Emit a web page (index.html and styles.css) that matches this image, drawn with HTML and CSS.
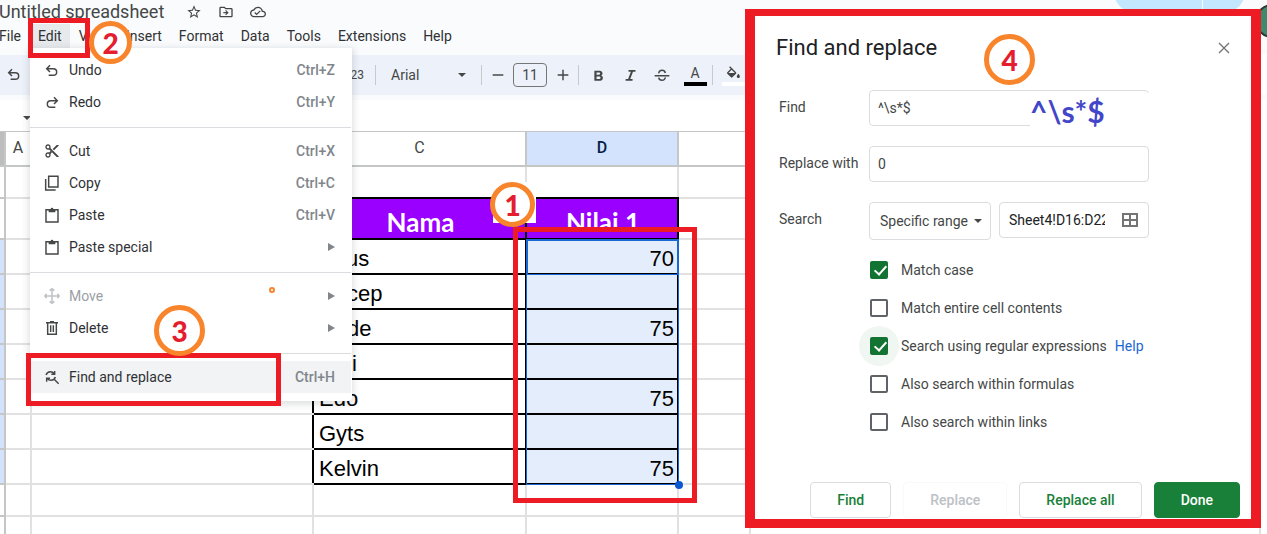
FILE: index.html
```html
<!DOCTYPE html>
<html lang="en">
<head>
    <meta charset="UTF-8">
    <meta name="viewport" content="width=device-width, initial-scale=1.0">
    <title>Untitled spreadsheet</title>
    <link rel="stylesheet" href="styles.css">
</head>
<body>

    <header class="header">
        <div class="title-row">
            <span class="doc-title">Untitled spreadsheet</span>
            <svg class="icon" viewBox="0 0 24 24"><path d="M22 9.24l-7.19-.62L12 2 9.19 8.63 2 9.24l5.46 4.73L5.82 21 12 17.27 18.18 21l-1.63-7.03L22 9.24zM12 15.4l-3.76 2.27 1-4.28-3.32-2.88 4.38-.38L12 6.1l1.71 4.04 4.38.38-3.32 2.88 1 4.28L12 15.4z"/></svg>
            <svg class="icon" viewBox="0 0 24 24"><path d="M20 6h-8l-2-2H4c-1.1 0-2 .9-2 2v12c0 1.1.9 2 2 2h16c1.1 0 2-.9 2-2V8c0-1.1-.9-2-2-2zm0 12H4V6h5.2l2 2H20v10zm-8-1l4-4-4-4-1.2 1.2 1.9 1.9H8v1.8h4.7l-1.9 1.9z"/></svg>
            <svg class="icon" viewBox="0 0 24 24"><path d="M19.35 10.04C18.67 6.59 15.64 4 12 4 9.11 4 6.6 5.64 5.35 8.04 2.34 8.36 0 10.91 0 14c0 3.31 2.69 6 6 6h13c2.76 0 5-2.24 5-5 0-2.64-2.05-4.78-4.65-4.96zM19 18H6c-2.21 0-4-1.79-4-4 0-2.05 1.53-3.76 3.56-3.97l1.07-.11.5-.95C8.08 7.14 9.94 6 12 6c2.62 0 4.88 1.86 5.39 4.43l.3 1.5 1.53.11c1.56.1 2.78 1.41 2.78 2.96 0 1.65-1.35 3-3 3zm-9-3.82l-2.09-2.09L6.5 13.5 10 17l6.01-6.01-1.41-1.41z"/></svg>
        </div>
        <nav class="menubar">
            <button>File</button>
            <button class="open">Edit</button>
            <button>View</button>
            <button>Insert</button>
            <button>Format</button>
            <button>Data</button>
            <button>Tools</button>
            <button>Extensions</button>
            <button>Help</button>
        </nav>
        <div class="share"><span></span><span></span></div>
        <div class="avatar"></div>
    </header>

    <div class="toolbar">
        <div class="tool-left">
            <button aria-label="Undo"><svg class="icon" viewBox="0 0 24 22"><path class="line" d="M9 4L4 9l5 5M4.5 9H14a5 5 0 0 1 0 10H7"/></svg></button>
            <span class="format-123">123</span>
        </div>
        <span class="divider"></span>
        <button class="font-name">Arial <i class="caret"></i></button>
        <span class="divider"></span>
        <button class="step" aria-label="Decrease font size"><svg class="icon" viewBox="0 0 24 24"><path class="line" d="M4 12h16"/></svg></button>
        <input class="font-size" type="text" value="11" aria-label="Font size">
        <button class="step" aria-label="Increase font size"><svg class="icon" viewBox="0 0 24 24"><path class="line" d="M4 12h16M12 4v16"/></svg></button>
        <span class="divider"></span>
        <button class="tool" aria-label="Bold"><svg class="icon" viewBox="0 0 22 22"><path d="M15.6 11.79c.97-.67 1.65-1.77 1.65-2.79 0-2.26-1.75-4-4-4H6v14h8.04c2.09 0 3.71-1.7 3.71-3.79 0-1.52-.86-2.82-2.15-3.42zM9 7.5h3.5c.83 0 1.5.67 1.5 1.5s-.67 1.5-1.5 1.5H9v-3zm4 9H9v-3.5h4c.83 0 1.5.92 1.5 1.75S13.83 16.5 13 16.5z"/></svg></button>
        <button class="tool" aria-label="Italic"><svg class="icon" viewBox="0 0 22 22"><path d="M9 4v2.600h3.200l-3.800 9.800H5V19h9.500v-2.600h-3.200l3.800-9.800H18.500V4z"/></svg></button>
        <button class="tool" aria-label="Strikethrough"><svg class="icon" viewBox="0 0 24 24"><path class="line" d="M1 13h22M17 9c-.5-2.500-2.400-4-5-4S7 6.800 7.200 9.500M7 16c.5 2.500 2.400 4 5 4s5-1.800 4.800-4.500"/></svg></button>
        <button class="tool colour" aria-label="Text colour"><span>A</span><i></i></button>
        <span class="divider"></span>
        <button class="tool colour fill" aria-label="Fill colour">
            <svg class="icon" viewBox="0 0 24 20"><path d="M16.56 8.94L7.62 0 6.21 1.41l2.38 2.38-5.15 5.15c-.59.59-.59 1.54 0 2.12l5.5 5.5c.29.29.68.44 1.06.44s.77-.15 1.06-.44l5.5-5.5c.59-.58.59-1.53 0-2.12zM5.21 10L10 5.21 14.79 10H5.21zM20 11s-2.4 2.6-2.4 4.2a2.4 2.4 0 0 0 4.8 0C22.4 13.6 20 11 20 11z"/></svg>
            <i></i>
        </button>
    </div>

    <div class="formula-bar"><i class="caret"></i></div>

    <main class="workspace">
        <div class="sheet">
            <table>
                <colgroup>
                    <col class="col-row"><col class="col-a"><col class="col-b"><col class="col-c"><col class="col-d"><col class="col-e"><col>
                </colgroup>
                <tr class="letters"><th class="corner"></th><th>A</th><th>B</th><th>C</th><th class="on">D</th><th></th><th></th></tr>
                <tr class="short above"><th></th><td></td><td></td><td></td><td></td><td></td><td></td></tr>
                <tr class="heading"><th></th><td></td><td></td><td class="box">Nama</td><td class="box">Nilai 1</td><td></td><td></td></tr>
                <tr><th class="on"></th><td></td><td></td><td class="box">Agus</td><td class="box num">70</td><td></td><td></td></tr>
                <tr><th class="on"></th><td></td><td></td><td class="box">Cecep</td><td class="box num"></td><td></td><td></td></tr>
                <tr><th class="on"></th><td></td><td></td><td class="box">Dede</td><td class="box num">75</td><td></td><td></td></tr>
                <tr><th class="on"></th><td></td><td></td><td class="box">Didi</td><td class="box num"></td><td></td><td></td></tr>
                <tr><th class="on"></th><td></td><td></td><td class="box">Edo</td><td class="box num">75</td><td></td><td></td></tr>
                <tr><th class="on"></th><td></td><td></td><td class="box">Gyts</td><td class="box num"></td><td></td><td></td></tr>
                <tr><th class="on"></th><td></td><td></td><td class="box">Kelvin</td><td class="box num">75</td><td></td><td></td></tr>
                <tr class="short"><th></th><td></td><td></td><td></td><td></td><td></td><td></td></tr>
                <tr class="short"><th></th><td></td><td></td><td></td><td></td><td></td><td></td></tr>
            </table>
            <div class="selection"><div class="active-cell"></div><div class="handle"></div></div>
        </div>
        <aside class="rail"></aside>
    </main>

    <div class="menu">
        <button><svg class="icon" viewBox="0 0 24 22"><path class="line" d="M9 4L4 9l5 5M4.5 9H14a5 5 0 0 1 0 10H7"/></svg>Undo<kbd>Ctrl+Z</kbd></button>
        <button><svg class="icon" viewBox="0 0 24 22"><path class="line" d="M15 4l5 5-5 5M19.5 9H10a5 5 0 0 0 0 10h7"/></svg>Redo<kbd>Ctrl+Y</kbd></button>
        <hr>
        <button><svg class="icon" viewBox="0 0 24 24"><path d="M9.64 7.64c.23-.5.36-1.05.36-1.64 0-2.21-1.79-4-4-4S2 3.79 2 6s1.79 4 4 4c.59 0 1.14-.13 1.64-.36L10 12l-2.36 2.36C7.14 14.13 6.59 14 6 14c-2.21 0-4 1.79-4 4s1.79 4 4 4 4-1.79 4-4c0-.59-.13-1.14-.36-1.64L12 14l7 7h3v-1L9.64 7.64zM6 8c-1.1 0-2-.89-2-2s.9-2 2-2 2 .89 2 2-.9 2-2 2zm0 12c-1.1 0-2-.89-2-2s.9-2 2-2 2 .89 2 2-.9 2-2 2zm6-7.5c-.28 0-.5-.22-.5-.5s.22-.5.5-.5.5.22.5.5-.22.5-.5.5zM19 3l-6 6 2 2 7-7V3z"/></svg>Cut<kbd>Ctrl+X</kbd></button>
        <button><svg class="icon" viewBox="0 0 24 24"><path class="line" d="M7 2h14v16H7zM2.500 6v16.500h15"/></svg>Copy<kbd>Ctrl+C</kbd></button>
        <button><svg class="icon" viewBox="0 0 24 24"><path class="line" d="M3 4h18v18.500H3z"/><path d="M7 3h3a2 2 0 0 1 4 0h3v5H7z"/></svg>Paste<kbd>Ctrl+V</kbd></button>
        <button><svg class="icon" viewBox="0 0 24 24"><path class="line" d="M3 4h18v18.500H3z"/><path d="M7 3h3a2 2 0 0 1 4 0h3v5H7z"/></svg>Paste special<span class="more"></span></button>
        <hr>
        <button disabled><svg class="icon" viewBox="0 0 24 24"><path class="line" d="M12 1v22M1 12h22M8.500 4L12 1l3.500 3M8.500 20l3.500 3 3.500-3M4 8.500L1 12l3 3.500M20 8.500l3 3.500-3 3.500"/></svg>Move<span class="more"></span></button>
        <button><svg class="icon" viewBox="0 0 24 24"><path class="line" d="M3 4h18M5.500 4v17.500h13V4M10 8v10M14 8v10M9 2.500h6"/></svg>Delete<span class="more"></span></button>
        <hr>
        <button class="hover"><svg class="icon" viewBox="0 0 24 24"><path class="line" d="M3 9c1-3 3.500-5 6.500-5 2.500 0 4.500 1.200 5.500 3M16 3v5h-5M17 12c-1 3-3.500 5-6.500 5-2.500 0-4.500-1.200-5.500-3M4 19v-5h5M16 16l6 6"/></svg>Find and replace<kbd>Ctrl+H</kbd></button>
    </div>

    <form class="dialog">
        <div class="dialog-title">
            <h2>Find and replace</h2>
            <button type="button" class="close" aria-label="Close"><svg viewBox="0 0 12 12"><path d="M1 1l10 10M11 1L1 11"/></svg></button>
        </div>
        <div class="field">
            <label for="find">Find</label>
            <input class="box-input" id="find" type="text" value="^\s*$">
        </div>
        <div class="field">
            <label for="replace">Replace with</label>
            <input class="box-input" id="replace" type="text" value="0">
        </div>
        <div class="field">
            <label for="search">Search</label>
            <div class="select">
                <select id="search"><option>Specific range</option></select>
                <i class="caret"></i>
            </div>
            <div class="range">
                <input type="text" value="Sheet4!D16:D22" aria-label="Range">
                <svg viewBox="0 0 16 14"><path d="M1 1h14v12H1zM8 1v12M1 7h14"/></svg>
            </div>
        </div>
        <div class="options">
            <div><input type="checkbox" id="case" checked><label for="case">Match case</label></div>
            <div><input type="checkbox" id="entire"><label for="entire">Match entire cell contents</label></div>
            <div><input type="checkbox" id="regex" class="focus" checked><label for="regex">Search using regular expressions</label><a href="#">Help</a></div>
            <div><input type="checkbox" id="formulas"><label for="formulas">Also search within formulas</label></div>
            <div><input type="checkbox" id="links"><label for="links">Also search within links</label></div>
        </div>
        <div class="actions">
            <button type="button">Find</button>
            <button type="button" disabled>Replace</button>
            <button type="button">Replace all</button>
            <button type="button" class="primary">Done</button>
        </div>
        <div class="regex-note">^\s*$</div>
    </form>

    <!-- step markers -->
    <div class="frame frame-range"></div>
    <div class="frame frame-edit"></div>
    <div class="frame frame-find"></div>
    <div class="patch"></div>
    <div class="step-no one">1</div>
    <div class="step-no two">2</div>
    <div class="step-no three">3</div>
    <div class="step-no four">4</div>
    <div class="dot"></div>

</body>
</html>
```

FILE: styles.css
```css
* {
    box-sizing: border-box;
}
body {
    margin: 0;
    height: 100vh;
    display: flex;
    flex-direction: column;
    position: relative;
    overflow: hidden;
    background-color: #fff;
    color: #444746;
    font-family: Roboto, sans-serif;
    font-size: 14px;
}
button, input, select {
    font-family: inherit;
    font-size: 14px;
    color: inherit;
}
button {
    border: none;
    padding: 0;
    background: none;
    cursor: pointer;
}
.icon {
    width: 16px;
    height: 16px;
    flex: none;
    fill: #444746;
}
.icon .line {
    fill: none;
    stroke: #444746;
    stroke-width: 2.2;
}
.caret {
    width: 0;
    height: 0;
    border: 4px solid transparent;
    border-top-color: #444746;
    border-bottom: none;
}

/* header */
.header {
    position: relative;
    height: 55px;
    flex: none;
    overflow: hidden;
    background-color: #f9fbfd;
}
.title-row {
    display: flex;
    align-items: center;
    gap: 16px;
    height: 24px;
}
.doc-title {
    margin-left: -1px;
    margin-right: 6px;
    font-size: 18px;
    line-height: 22px;
}
.menubar {
    display: flex;
    gap: 1px;
    height: 24px;
    margin-left: -9px;
}
.menubar button {
    padding: 0 8px;
    color: #303134;
}
.menubar .open {
    background-color: #e7eaed;
}
.share {
    position: absolute;
    top: -28px;
    right: 22px;
    display: flex;
    gap: 1px;
}
.share span {
    width: 88px;
    height: 40px;
    border-radius: 20px 0 0 20px;
    background-color: #c2e7ff;
}
.share span + span {
    width: 42px;
    border-radius: 0 20px 20px 0;
}
.avatar {
    position: absolute;
    top: 4px;
    right: -22px;
    width: 34px;
    height: 34px;
    border-radius: 50%;
    border: 2px solid #2b3a35;
    background-color: #3d8a6c;
}

/* toolbar */
.toolbar {
    display: flex;
    align-items: center;
    height: 40px;
    flex: none;
    margin-right: 6px;
    background-color: #edf1fa;
}
.tool-left {
    display: flex;
    align-items: center;
    justify-content: space-between;
    width: 375px;
    padding: 0 11px 0 6px;
}
.format-123 {
    font-size: 12px;
}
.divider {
    width: 1px;
    height: 20px;
    background-color: #c7c9cc;
}
.font-name {
    display: flex;
    align-items: center;
    justify-content: space-between;
    width: 105px;
    padding: 0 15px;
}
.step {
    display: flex;
    justify-content: center;
    width: 31px;
}
.font-size {
    width: 34px;
    height: 24px;
    padding: 0;
    border: 1px solid #747775;
    border-radius: 4px;
    background: none;
    text-align: center;
}
.step + .divider {
    margin-right: 3px;
}
.tool {
    display: flex;
    justify-content: center;
    width: 32px;
}
.colour {
    flex-direction: column;
    align-items: center;
    gap: 1px;
    width: 34px;
    line-height: 16px;
}
.colour i {
    width: 23px;
    height: 4px;
    background-color: #000;
}
.colour + .divider {
    margin-right: 3px;
}
.fill i {
    background-color: #fff;
}
.formula-bar {
    display: flex;
    align-items: center;
    height: 36px;
    flex: none;
    padding: 4px 0 0 23px;
    border-top: 5px solid #f9fbfd;
}

/* spreadsheet */
.workspace {
    display: flex;
    flex: 1;
    min-height: 0;
}
.sheet {
    position: relative;
    flex: 1;
}
.rail {
    width: 6px;
    background-color: #fff;
}
.sheet table {
    width: 100%;
    table-layout: fixed;
    border-collapse: collapse;
    font-family: "Liberation Sans", Arial, sans-serif;
    font-size: 22px;
    line-height: 24px;
    color: #000;
}
.col-row { width: 5px; }
.col-a { width: 26px; }
.col-b { width: 282px; }
.col-c { width: 213px; }
.col-d { width: 152px; }
.col-e { width: 72px; }
.sheet tr {
    height: 35px;
}
.sheet .short {
    height: 32px;
}
.sheet .letters {
    height: 34px;
}
.sheet .heading {
    height: 41px;
}
.sheet th, .sheet td {
    padding: 0 3px 2px 5px;
    border: 2px solid #e1e1e1;
    vertical-align: bottom;
    overflow: hidden;
    white-space: nowrap;
}
.sheet th {
    padding: 0;
    border-color: #c4c7c5;
    border-left: none;
    font-family: Roboto, sans-serif;
    font-size: 16px;
    font-weight: 400;
    color: #444746;
}
.sheet .letters th {
    border-top-width: 1px;
    vertical-align: middle;
}
.sheet th.corner {
    background-color: #bdbdbd;
}
.sheet th.on {
    background-color: #d3e3fd;
}
.letters th.on {
    font-weight: 500;
    color: #041e49;
}
.sheet td.box {
    border-color: #000;
}
/* the cell before wins a collapsed border, so it gets the black edge too */
.sheet td:has(+ .box) {
    border-right-color: #000;
}
.sheet .above td:nth-child(4), .sheet .above td:nth-child(5) {
    border-bottom-color: #000;
}
.sheet .heading .box {
    padding-bottom: 4px;
    background-color: #9900ff;
    color: #fff;
    font-family: Lato, sans-serif;
    font-size: 26px;
    font-weight: 700;
    text-align: center;
}
.sheet .num {
    background-color: #e4edfb;
    text-align: right;
}
.selection {
    position: absolute;
    top: 108px;
    left: 526px;
    width: 153px;
    height: 246px;
    border: 1px solid #1967d2;
}
.active-cell {
    height: 35px;
    border: 1px solid #1967d2;
}
.handle {
    position: absolute;
    right: -5px;
    bottom: -5px;
    width: 8px;
    height: 8px;
    border-radius: 50%;
    background-color: #0b57d0;
}

/* edit menu */
.menu {
    position: absolute;
    top: 48px;
    left: 30px;
    width: 322px;
    padding: 6px 1px 8px 0;
    border-radius: 0 0 4px 4px;
    background-color: #fff;
    box-shadow: 0 2px 6px 2px rgba(60, 64, 67, 0.15);
}
.menu button {
    display: flex;
    align-items: center;
    width: 100%;
    height: 32px;
    padding: 0 16px 0 14px;
    color: #303134;
}
.menu .icon {
    margin-right: 9px;
}
.menu kbd, .menu .more {
    margin-left: auto;
}
.menu kbd {
    font-family: inherit;
    font-weight: 500;
    color: #80868b;
}
.menu .more {
    border: 4px solid transparent;
    border-left: 7px solid #80868b;
    border-right: none;
}
.menu hr {
    height: 1px;
    margin: 9px 0 7px;
    border: none;
    background-color: #dadce0;
}
.menu button:disabled {
    color: #9aa0a6;
}
.menu button:disabled .line {
    stroke: #bdc1c6;
}
.menu .hover {
    background-color: #f1f3f4;
}

/* find and replace */
.dialog {
    position: absolute;
    z-index: 0;
    top: 9px;
    left: 745px;
    right: 6px;
    padding: 20px 11px 1px 24px;
    border: solid #ed1c24;
    border-width: 7px 10px 9px;
    background-color: #fff;
}
.dialog-title {
    display: flex;
    align-items: center;
    justify-content: space-between;
    height: 24px;
    margin: 0 10px 30px -3px;
}
.dialog h2 {
    margin: 0;
    font-size: 22px;
    line-height: 24px;
    font-weight: 400;
    color: #202124;
}
.close svg {
    display: block;
    width: 12px;
    height: 12px;
    fill: none;
    stroke: #757575;
    stroke-width: 1.4;
}
.field {
    display: flex;
    height: 36px;
    margin-bottom: 20px;
    gap: 8px;
}
.field label {
    width: 82px;
    line-height: 35px;
}
.box-input, .field select, .range {
    border: 1px solid #dadce0;
    border-radius: 4px;
    background-color: #fff;
}
.box-input {
    width: 280px;
    padding: 0 8px;
}
.select {
    position: relative;
    height: 38px;
}
.field select {
    width: 122px;
    height: 38px;
    padding: 0 10px;
    appearance: none;
}
.select .caret {
    position: absolute;
    top: 17px;
    right: 9px;
}
.range {
    display: flex;
    align-items: center;
    justify-content: space-between;
    width: 150px;
    padding: 0 10px 0 9px;
}
.range input {
    width: 96px;
    padding: 0;
    border: none;
    color: #202124;
}
.range svg {
    width: 16px;
    height: 14px;
    fill: none;
    stroke: #757575;
    stroke-width: 2;
}
.options {
    margin: -7px 0 0 91px;
}
.options div {
    display: flex;
    align-items: center;
    height: 38px;
}
.options input {
    position: relative;
    width: 18px;
    height: 18px;
    margin: 0 13px 0 0;
    border: 2px solid #5f6368;
    border-radius: 2px;
    appearance: none;
}
.options input:checked {
    border-color: #137333;
    background-color: #137333;
}
.options input:checked::after {
    content: "";
    position: absolute;
    left: 5px;
    top: 0;
    width: 5px;
    height: 10px;
    border: solid #fff;
    border-width: 0 2px 2px 0;
    transform: rotate(42deg);
}
.options .focus::before {
    content: "";
    position: absolute;
    z-index: -1;
    top: -13px;
    left: -13px;
    width: 40px;
    height: 40px;
    border-radius: 50%;
    background-color: #f0f6f2;
}
.options a {
    margin-left: 8px;
    color: #1967d2;
    text-decoration: none;
}
.actions {
    display: flex;
    justify-content: flex-end;
    gap: 12px;
    margin-top: 41px;
}
.actions button {
    height: 36px;
    padding: 0 26px;
    border: 1px solid #dadce0;
    border-radius: 4px;
    font-weight: 500;
    color: #188038;
}
.actions button:disabled {
    border-color: #f8f9fa;
    color: #bdc1c6;
}
.actions .primary {
    border-color: #188038;
    background-color: #188038;
    color: #fff;
}
.regex-note {
    position: absolute;
    top: 77px;
    left: 275px;
    width: 125px;
    height: 36px;
    font-family: Lato, sans-serif;
    font-size: 30px;
    line-height: 36px;
    font-weight: 700;
    color: #4346c8;
    background-color: #fff;
}

/* step markers */
.frame {
    position: absolute;
    border: 5px solid #ed1c24;
}
.frame-range {
    top: 227px;
    left: 513px;
    width: 184px;
    height: 276px;
}
.frame-edit {
    top: 18px;
    left: 28px;
    width: 62px;
    height: 40px;
}
.frame-find {
    top: 353px;
    left: 26px;
    width: 255px;
    height: 53px;
}
.patch {
    position: absolute;
    top: 182px;
    left: 493px;
    width: 43px;
    height: 41px;
    background-color: #fff;
}
.step-no {
    position: absolute;
    z-index: 1;
    display: flex;
    align-items: center;
    justify-content: center;
    width: 51px;
    height: 51px;
    border: 5px solid #f8842c;
    border-radius: 50%;
    background-color: #fff;
    font-family: Lato, sans-serif;
    font-size: 28px;
    font-weight: 900;
    color: #e41e2f;
}
.one {
    top: 182px;
    left: 490px;
    width: 45px;
    height: 45px;
}
.two {
    top: 21px;
    left: 89px;
    width: 43px;
    height: 43px;
}
.three {
    top: 305px;
    left: 154px;
}
.four {
    top: 34px;
    left: 984px;
}
.dot {
    position: absolute;
    top: 287px;
    left: 269px;
    width: 6px;
    height: 6px;
    border: 2px solid #f8842c;
    border-radius: 50%;
}
```
